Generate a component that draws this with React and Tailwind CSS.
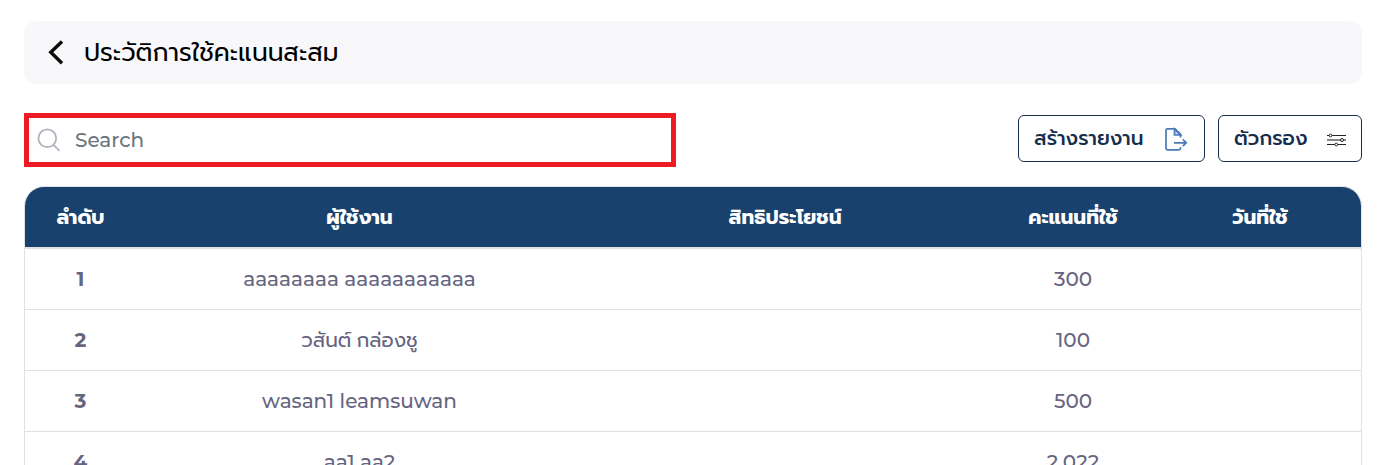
import React from "react";

const rows = [
  { no: "1", user: "aaaaaaaa aaaaaaaaaaa", points: "300", weight: "font-medium" },
  { no: "2", user: "วสันต์ กล่องชู", points: "100", weight: "font-normal" },
  { no: "3", user: "wasan1 leamsuwan", points: "500", weight: "font-medium" },
  { no: "4", user: "aa1 aa2", points: "2,022", weight: "font-medium" },
];

const grid = "grid grid-cols-[111px_447px_404px_172px_1fr] items-center text-center";

export default function App() {
  return (
    <div className="h-[465px] overflow-hidden bg-white pl-6 pr-[17px] pt-[21px] font-['Montserrat','Prompt','Kanit','Noto_Sans_Thai',sans-serif]">
      <header className="flex h-[63px] items-center rounded-xl bg-[#f8f8fa] pl-6">
        <svg className="h-[26px] w-[17px]" viewBox="0 0 17 26" fill="none" stroke="#0b0b0b" strokeWidth="3.4">
          <path d="M14 1.6 2.8 12.2 14 23.2" />
        </svg>
        <h1 className="ml-[19px] whitespace-nowrap pt-px text-[25px] text-black">ประวัติการใช้คะแนนสะสม</h1>
      </header>

      <div className="mt-[29px] flex h-[54px] items-start justify-between">
        <div className="flex h-[54px] w-[652px] items-center border-5 border-[#ed1c24] pl-[8px]">
          <svg className="size-[26px]" viewBox="0 0 26 26" fill="none" stroke="#b5b2bf" strokeWidth="1.8">
            <circle cx="10.3" cy="11.3" r="8.9" />
            <path d="m16.6 17.8 5.9 6" />
          </svg>
          <span className="ml-[12px] text-xl font-medium text-[#6c757d]">Search</span>
        </div>
        <div className="mt-0.5 flex gap-[13px] text-xl font-medium text-[#162d4d]">
          <button className="flex h-[47px] w-[187px] items-center justify-between rounded-md border border-[#162d4d] pl-[15px] pr-4">
            <span className="whitespace-nowrap pb-0.5">สร้างรายงาน</span>
            <svg className="size-6" viewBox="0 0 24 24" fill="none" stroke="#4a7ab5" strokeWidth="1.7">
              <path d="M16.5 10.5V7L11 1.8H3.5A1.5 1.5 0 0 0 2 3.3v18a1.5 1.5 0 0 0 1.5 1.5H15a1.5 1.5 0 0 0 1.5-1.5v-1.4" />
              <path d="M10.5 2v6h6Z" fill="#cbdcf0" />
              <path d="M10 15.8h12M18.8 12.4l3.4 3.4-3.4 3.4" />
            </svg>
          </button>
          <button className="flex h-[47px] w-36 items-center justify-between rounded-md border border-[#162d4d] pl-[15px] pr-[15px]">
            <span className="whitespace-nowrap pb-0.5">ตัวกรอง</span>
            <svg className="mt-[3px] h-3.5 w-5" viewBox="0 0 20 14" fill="white" stroke="#222" strokeWidth="1">
              <path d="M1 2.5h19M1 11.5h19" />
              <path d="M1 7h19" stroke="#858585" strokeWidth="2" />
              <circle cx="4.5" cy="2.5" r="1.4" />
              <circle cx="16" cy="7" r="1.5" />
              <circle cx="10.3" cy="11.5" r="1.4" />
            </svg>
          </button>
        </div>
      </div>

      <main className="mt-[19px] h-[400px] overflow-hidden rounded-t-[20px] border border-[#dee2e6] text-xl font-medium text-[#66657f]">
        <div className={`${grid} h-[62px] border-b-2 border-[#dee2e6] bg-[#19416d] font-bold text-white`}>
          <span>ลำดับ</span>
          <span>ผู้ใช้งาน</span>
          <span>สิทธิประโยชน์</span>
          <span>คะแนนที่ใช้</span>
          <span>วันที่ใช้</span>
        </div>
        {rows.map((r) => (
          <div key={r.no} className={`${grid} h-[61px] border-b border-[#dee2e6]`}>
            <span className="font-bold">{r.no}</span>
            <span className={r.weight}>{r.user}</span>
            <span />
            <span>{r.points}</span>
            <span />
          </div>
        ))}
      </main>
    </div>
  );
}
